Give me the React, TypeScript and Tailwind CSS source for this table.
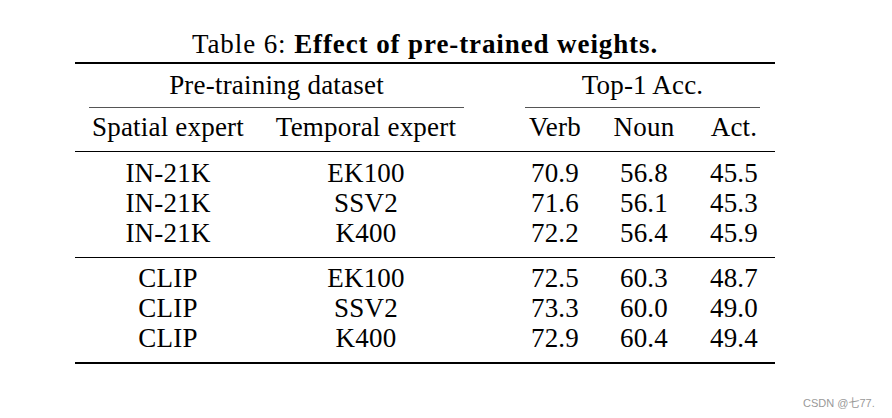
import React from "react";

const rows1 = [
  ["IN-21K", "EK100", "70.9", "56.8", "45.5"],
  ["IN-21K", "SSV2", "71.6", "56.1", "45.3"],
  ["IN-21K", "K400", "72.2", "56.4", "45.9"],
];
const rows2 = [
  ["CLIP", "EK100", "72.5", "60.3", "48.7"],
  ["CLIP", "SSV2", "73.3", "60.0", "49.0"],
  ["CLIP", "K400", "72.9", "60.4", "49.4"],
];

function Row({ cells }: { cells: string[] }) {
  return (
    <div className="grid grid-cols-[186px_210px_44px_80px_98px_82px] h-[30px] leading-[30px]">
      <div className="text-center whitespace-nowrap">{cells[0]}</div>
      <div className="text-center whitespace-nowrap">{cells[1]}</div>
      <div />
      <div className="text-center whitespace-nowrap">{cells[2]}</div>
      <div className="text-center whitespace-nowrap">{cells[3]}</div>
      <div className="text-center whitespace-nowrap">{cells[4]}</div>
    </div>
  );
}

export default function App() {
  return (
    <div className="relative w-[892px] h-[418px] bg-white text-black font-['Liberation_Serif','Times_New_Roman',serif] text-[27px] tracking-[0.2px] overflow-hidden">
      <div className="ml-[75px] w-[700px] pt-[29px]">
        <div className="text-center leading-[30px] h-[30px] whitespace-nowrap tracking-[0.9px]">
          Table 6: <span className="font-bold">Effect of pre-trained weights.</span>
        </div>
        <div className="mt-[3px] h-[2px] bg-black" />
        <div className="flex mt-[6px]">
          <div className="ml-[14px] w-[375px] flex flex-col">
            <div className="text-center leading-[30px] h-[30px] whitespace-nowrap">Pre-training dataset</div>
            <div className="mt-[7px] h-px bg-[#555]" />
          </div>
          <div className="ml-[61px] w-[235px] flex flex-col">
            <div className="text-center leading-[30px] h-[30px] whitespace-nowrap">Top-1 Acc.</div>
            <div className="mt-[7px] h-px bg-[#555]" />
          </div>
        </div>
        <div className="mt-[4px]">
          <Row cells={["Spatial expert", "Temporal expert", "Verb", "Noun", "Act."]} />
        </div>
        <div className="mt-[9px] h-px bg-black" />
        <div className="pt-[6px]">
          {rows1.map((r, i) => (
            <Row key={i} cells={r} />
          ))}
        </div>
        <div className="mt-[9px] h-px bg-black" />
        <div className="pt-[5px]">
          {rows2.map((r, i) => (
            <Row key={i} cells={r} />
          ))}
        </div>
        <div className="mt-[9px] h-[2px] bg-black" />
      </div>
      <div className="absolute left-[803px] top-[396px] text-[11px] leading-[14px] tracking-normal text-[#999] font-['Liberation_Sans','Noto_Sans_CJK_SC',sans-serif] whitespace-nowrap">
        CSDN @七77.
      </div>
    </div>
  );
}
